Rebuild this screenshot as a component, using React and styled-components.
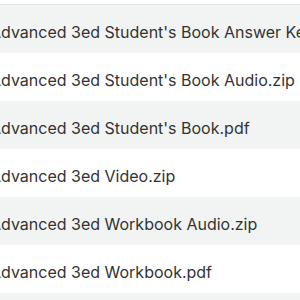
import React from "react";
import styled, { createGlobalStyle } from "styled-components";

const Global = createGlobalStyle`
  html, body { margin: 0; padding: 0; background: #ffffff; overflow: hidden; }
  body { width: 300px; height: 300px; }
  #root { width: 300px; height: 300px; overflow: hidden; }
`;

const List = styled.div`
  display: flex;
  flex-direction: column;
  width: 330px;
  margin-left: -10px;
  font-family: Inter, "Liberation Sans", Arial, sans-serif;
`;

const TopEdge = styled.div`
  flex: none;
  height: 4px;
  border-bottom: 1px solid #e4e5e5;
`;

const Row = styled.div`
  flex: none;
  height: 48px;
  display: flex;
  align-items: center;
  background: ${(p) => (p.$shaded ? "#f2f3f3" : "#ffffff")};
  overflow: hidden;
`;

const Name = styled.span`
  padding-top: 5px;
  white-space: nowrap;
  font-size: 16px;
  color: #333333;
`;

const files = [
  "Advanced 3ed Student's Book Answer Key.pdf",
  "Advanced 3ed Student's Book Audio.zip",
  "Advanced 3ed Student's Book.pdf",
  "Advanced 3ed Video.zip",
  "Advanced 3ed Workbook Audio.zip",
  "Advanced 3ed Workbook.pdf",
  "Advanced 3ed Workbook Answer Key.pdf",
];

export default function App() {
  return (
    <>
      <Global />
      <List>
        <TopEdge />
        {files.map((f, i) => (
          <Row key={f} $shaded={i % 2 === 0}>
            <Name>{f}</Name>
          </Row>
        ))}
      </List>
    </>
  );
}
